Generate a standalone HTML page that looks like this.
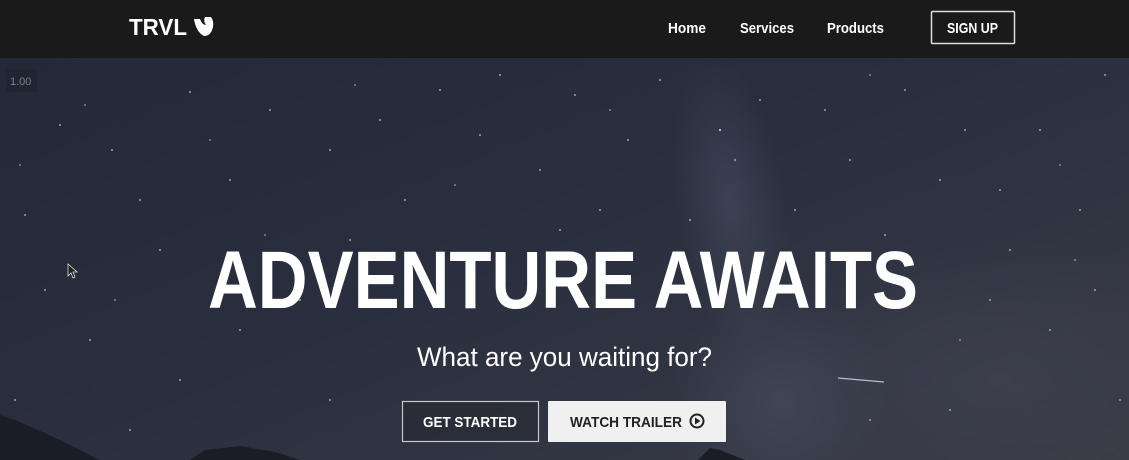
<!DOCTYPE html>
<html><head><meta charset="utf-8"><style>
html,body{margin:0;padding:0;width:1129px;height:460px;overflow:hidden;background:#2a2f3c;font-family:"Liberation Sans",sans-serif}
svg{position:absolute;left:0;top:0}
</style></head><body>
<svg width="1129" height="460" viewBox="0 0 1129 460" xmlns="http://www.w3.org/2000/svg">
<defs>
<linearGradient id="bg" x1="0" y1="0" x2="1" y2="1">
<stop offset="0" stop-color="#222838"/>
<stop offset="0.5" stop-color="#2a2f3f"/>
<stop offset="1" stop-color="#3a3c46"/>
</linearGradient>
<radialGradient id="mw" cx="0.5" cy="0.5" r="0.5">
<stop offset="0" stop-color="#5a6078" stop-opacity="0.35"/>
<stop offset="1" stop-color="#5a6078" stop-opacity="0"/>
</radialGradient>
<radialGradient id="bl" cx="0.5" cy="0.5" r="0.5">
<stop offset="0" stop-color="#3f4250" stop-opacity="0.7"/>
<stop offset="1" stop-color="#3f4250" stop-opacity="0"/>
</radialGradient>
</defs>
<rect width="1129" height="460" fill="url(#bg)"/>
<ellipse cx="730" cy="200" rx="55" ry="150" fill="url(#mw)" transform="rotate(-8 730 200)"/>
<ellipse cx="780" cy="400" rx="110" ry="110" fill="url(#mw)"/>
<ellipse cx="1000" cy="380" rx="250" ry="140" fill="url(#bl)"/>
<g fill="#d8dce6" opacity="0.85">
<circle cx="25" cy="215" r="0.9"/><circle cx="60" cy="125" r="0.9"/><circle cx="112" cy="150" r="0.9"/><circle cx="140" cy="200" r="0.9"/>
<circle cx="190" cy="92" r="0.9"/><circle cx="230" cy="180" r="0.9"/><circle cx="270" cy="110" r="0.9"/><circle cx="300" cy="300" r="0.9"/>
<circle cx="330" cy="150" r="0.9"/><circle cx="380" cy="120" r="0.9"/><circle cx="405" cy="200" r="0.9"/><circle cx="440" cy="90" r="0.9"/>
<circle cx="480" cy="135" r="0.9"/><circle cx="500" cy="75" r="0.9"/><circle cx="540" cy="170" r="0.9"/><circle cx="575" cy="95" r="0.9"/>
<circle cx="600" cy="210" r="0.9"/><circle cx="628" cy="140" r="0.9"/><circle cx="660" cy="80" r="0.9"/><circle cx="690" cy="220" r="0.9"/>
<circle cx="720" cy="130" r="1.1"/><circle cx="735" cy="160" r="0.9"/><circle cx="760" cy="100" r="0.9"/><circle cx="795" cy="210" r="0.9"/>
<circle cx="825" cy="110" r="0.9"/><circle cx="850" cy="160" r="0.9"/><circle cx="885" cy="235" r="0.9"/><circle cx="905" cy="90" r="0.9"/>
<circle cx="940" cy="180" r="0.9"/><circle cx="965" cy="130" r="0.9"/><circle cx="1000" cy="190" r="0.9"/><circle cx="1040" cy="130" r="0.9"/>
<circle cx="1080" cy="210" r="0.9"/><circle cx="1105" cy="75" r="0.9"/><circle cx="1095" cy="290" r="0.9"/><circle cx="1050" cy="330" r="0.9"/>
<circle cx="990" cy="300" r="0.9"/><circle cx="950" cy="410" r="0.9"/><circle cx="180" cy="380" r="0.9"/><circle cx="90" cy="340" r="0.9"/>
<circle cx="130" cy="430" r="0.9"/><circle cx="240" cy="330" r="0.9"/><circle cx="330" cy="400" r="0.9"/><circle cx="45" cy="290" r="0.9"/>
<circle cx="15" cy="400" r="0.9"/><circle cx="870" cy="420" r="0.9"/><circle cx="1010" cy="250" r="0.9"/><circle cx="160" cy="250" r="0.9"/>
<circle cx="350" cy="240" r="0.9"/><circle cx="560" cy="230" r="0.9"/><circle cx="800" cy="300" r="0.9"/><circle cx="1120" cy="400" r="0.9"/>
<circle cx="85" cy="105" r="0.8"/><circle cx="210" cy="140" r="0.8"/><circle cx="355" cy="85" r="0.8"/><circle cx="455" cy="185" r="0.8"/>
<circle cx="610" cy="110" r="0.8"/><circle cx="870" cy="75" r="0.8"/><circle cx="1060" cy="165" r="0.8"/><circle cx="20" cy="165" r="0.8"/>
<circle cx="115" cy="300" r="0.8"/><circle cx="265" cy="235" r="0.8"/><circle cx="1075" cy="260" r="0.8"/><circle cx="960" cy="340" r="0.8"/>
</g>
<line x1="838" y1="378" x2="884" y2="382" stroke="#b8bcc8" stroke-width="1.3"/>
<path d="M0 415 L20 422 L60 440 L100 460 L0 460 Z" fill="#1b1d24"/>
<path d="M190 460 L205 450 L240 446 L275 452 L300 460 Z" fill="#1b1d24"/>
<path d="M698 460 L710 448 L720 450 L745 460 Z" fill="#1b1d24"/>
<rect width="1129" height="58" fill="#1a1a1a"/>
<text x="129" y="35" font-size="23" font-weight="bold" fill="#fff" textLength="58" lengthAdjust="spacingAndGlyphs">TRVL</text>
<path d="M194 19 Q196 32 204 36 Q211 36 213 27 Q214 21 211 17 L205 17 Q203 21 206 25 Q202 25 200 19 Z" fill="#fff"/>
<g font-size="15" font-weight="bold" fill="#fff">
<text x="668" y="33" textLength="38" lengthAdjust="spacingAndGlyphs">Home</text>
<text x="740" y="33" textLength="54" lengthAdjust="spacingAndGlyphs">Services</text>
<text x="827" y="33" textLength="57" lengthAdjust="spacingAndGlyphs">Products</text>
<text x="947" y="33" textLength="51" lengthAdjust="spacingAndGlyphs">SIGN UP</text>
</g>
<rect x="931.5" y="11.5" width="83" height="32" fill="none" stroke="#ddd" stroke-width="1.5" rx="1"/>
<rect x="6" y="69" width="31" height="23" rx="2" fill="#1f2430" opacity="0.8"/>
<text x="10" y="85" font-size="11" fill="#7a8090">1.00</text>
<path d="M68 264 L68 276 L71 273 L73 278 L75 277 L73 272 L77 272 Z" fill="#222" stroke="#ddd" stroke-width="0.8"/>
<text x="208" y="308" font-size="82" font-weight="bold" fill="#fff" textLength="710" lengthAdjust="spacingAndGlyphs">ADVENTURE AWAITS</text>
<text x="417" y="366" font-size="27" fill="#fff" textLength="295" lengthAdjust="spacingAndGlyphs">What are you waiting for?</text>
<rect x="402.5" y="401.5" width="136" height="40" fill="#23272f" fill-opacity="0.5" stroke="#c8c8c8" stroke-width="1.2"/>
<text x="423" y="427" font-size="15" font-weight="bold" fill="#fff" textLength="94" lengthAdjust="spacingAndGlyphs">GET STARTED</text>
<rect x="548" y="401" width="178" height="41" fill="#f0f0f0" rx="1"/>
<text x="570" y="427" font-size="15" font-weight="bold" fill="#222" textLength="112" lengthAdjust="spacingAndGlyphs">WATCH TRAILER</text>
<circle cx="697" cy="421" r="6.5" fill="none" stroke="#222" stroke-width="2"/>
<path d="M695 417.5 L700.5 421 L695 424.5 Z" fill="#222"/>
</svg>
</body></html>
